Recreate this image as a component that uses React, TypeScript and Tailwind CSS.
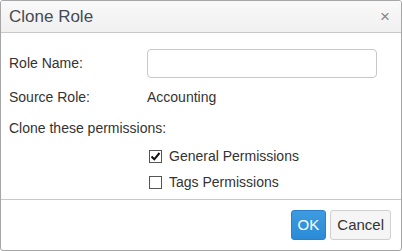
import { useState } from 'react'

function Check({ checked, onToggle }: { checked: boolean; onToggle: () => void }) {
  return (
    <span
      onClick={onToggle}
      className="flex items-center justify-center w-[13px] h-[13px] border border-[#555] bg-white shrink-0"
    >
      {checked && (
        <svg width="11" height="11" viewBox="0 0 11 11">
          <path d="M1.5 5.5 L4.3 8.3 L9.5 2" fill="none" stroke="#111" strokeWidth="2" />
        </svg>
      )}
    </span>
  )
}

export default function App() {
  const [general, setGeneral] = useState(true)
  const [tags, setTags] = useState(false)

  return (
    <div className="w-[402px] h-[251px] bg-white" style={{ fontFamily: '"Liberation Sans", Arial, sans-serif' }}>
      <div className="flex flex-col h-full border border-[#a6a6a6] rounded-[3px] overflow-hidden text-[14px] text-[#333]">
        {/* header */}
        <div className="flex items-center justify-between h-[32px] pl-[8px] pr-[11px] bg-gradient-to-b from-[#f9f9f9] to-[#f0f0f0] border-b border-[#c8c8c8]">
          <span className="text-[17px] text-[#454a55]">Clone Role</span>
          <button className="text-[#888] text-[17px] leading-none">×</button>
        </div>

        {/* body */}
        <div className="flex-1 flex flex-col pl-[8px] pt-[16px]">
          <div className="flex items-center h-[29px]">
            <label className="w-[138px]">Role Name:</label>
            <input className="w-[230px] h-[29px] border border-[#c8c8c8] rounded-[4px] px-2 outline-none" />
          </div>
          <div className="flex items-center mt-[9px] h-[20px]">
            <span className="w-[138px]">Source Role:</span>
            <span>Accounting</span>
          </div>
          <div className="mt-[11px] h-[20px] flex items-center">Clone these permissions:</div>
          <div className="flex flex-col pl-[140px] mt-[8px] gap-[6px]">
            <label className="flex items-center gap-[7px] h-[20px]">
              <Check checked={general} onToggle={() => setGeneral(!general)} />
              General Permissions
            </label>
            <label className="flex items-center gap-[7px] h-[20px]">
              <Check checked={tags} onToggle={() => setTags(!tags)} />
              Tags Permissions
            </label>
          </div>
        </div>

        {/* footer */}
        <div className="flex justify-end items-center gap-[4px] h-[51px] pr-[10px] border-t border-[#c8c8c8]">
          <button className="h-[30px] px-[6px] rounded-[3px] border border-[#2a80c9] bg-gradient-to-b from-[#3c9be0] to-[#2b8bd6] text-white text-[15px]">
            OK
          </button>
          <button className="h-[30px] px-[6px] rounded-[3px] border border-[#d0d0d0] bg-[#f5f5f5] text-[#333] text-[15px]">
            Cancel
          </button>
        </div>
      </div>
    </div>
  )
}
